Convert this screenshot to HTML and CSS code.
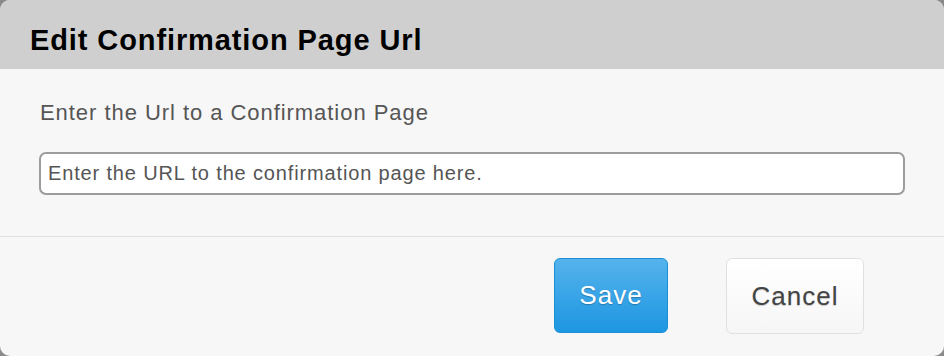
FILE: index.html
```html
<!DOCTYPE html>
<html>
<head>
<title>Edit Confirmation Page Url</title>
<link rel="stylesheet" href="styles.css">
</head>
<body>
<div class="modal">
    <div class="modal-header">
        <h3>Edit Confirmation Page Url</h3>
    </div>
    <div class="modal-body">
        <label for="confirmUrl">Enter the Url to a Confirmation Page</label>
        <input id="confirmUrl" type="text" placeholder="Enter the URL to the confirmation page here.">
    </div>
    <div class="modal-footer">
        <button class="btn btn-primary">Save</button>
        <button class="btn">Cancel</button>
    </div>
</div>
</body>
</html>
```

FILE: styles.css
```css
html, body {
    margin: 0;
    padding: 0;
    background-color: #8a8a8a;
    font-family: "Liberation Sans", Arial, sans-serif;
}
.modal {
    width: 944px;
    height: 356px;
    background-color: #f7f7f7;
    border-radius: 10px;
    overflow: hidden;
}
.modal-header {
    height: 69px;
    box-sizing: border-box;
    background-color: #cfcfcf;
    padding: 26px 0 0 30px;
}
.modal-header h3 {
    margin: 0;
    font-size: 29px;
    line-height: 28px;
    letter-spacing: 0.9px;
    font-weight: bold;
    color: #000;
}
.modal-body {
    height: 167px;
    padding: 0 39px;
    display: flex;
    flex-direction: column;
}
.modal-body label {
    margin-top: 32px;
    font-size: 22px;
    line-height: 24px;
    letter-spacing: 0.95px;
    color: #555;
    padding-left: 1px;
}
.modal-body input {
    margin-top: 27px;
    width: 866px;
    height: 43px;
    box-sizing: border-box;
    border: 2px solid #9c9c9c;
    border-radius: 7px;
    background-color: #fff;
    padding: 0 7px;
    font-family: "Liberation Sans", Arial, sans-serif;
    font-size: 20px;
    letter-spacing: 0.85px;
    color: #555;
    outline: none;
}
.modal-body input::placeholder {
    color: #555;
}
.modal-footer {
    border-top: 1px solid #e2e2e2;
    display: flex;
    justify-content: flex-end;
    gap: 58px;
    padding: 21px 80px 0 0;
}
.btn {
    width: 138px;
    height: 76px;
    border: 1px solid #e0e0e0;
    border-radius: 6px;
    background: linear-gradient(#ffffff, #f6f6f6);
    font-family: "Liberation Sans", Arial, sans-serif;
    font-size: 26px;
    letter-spacing: 1px;
    color: #444;
    text-shadow: 0 1px 1px rgba(0, 0, 0, 0.2);
}
.btn-primary {
    width: 114px;
    height: 75px;
    border: 1px solid #1b8fd6;
    background: linear-gradient(#55b3ec, #1d96e2);
    color: #fff;
    text-shadow: 0 1px 1px rgba(0, 0, 0, 0.25);
}
```
